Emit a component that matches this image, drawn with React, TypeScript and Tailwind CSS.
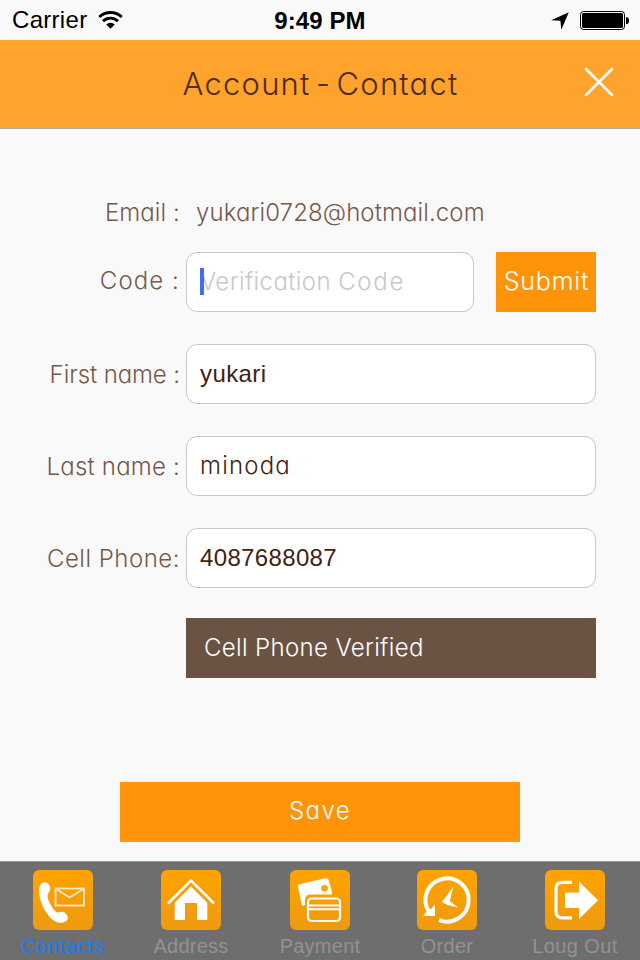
import type { ReactNode } from "react";

const gothic = "font-['Inter',sans-serif] font-light [font-feature-settings:'cv11'] whitespace-nowrap leading-none";

function StatusBar() {
  return (
    <div className="grid h-10 grid-cols-[1fr_auto_1fr] items-center text-black">
      <div className="flex items-center pl-[12px]">
        <span className="text-[24px] leading-none tracking-[0.3px]">Carrier</span>
        <svg className="ml-[11px]" width="25" height="20" viewBox="0 0 26 20" fill="none" stroke="black">
          <path d="M1.3 6.9a17 17 0 0 1 23.4 0" strokeWidth="3.1" />
          <path d="M5.2 11.2a11.3 11.3 0 0 1 15.6 0" strokeWidth="3" />
          <path d="M8.6 14.6a6.2 6.2 0 0 1 8.8 0L13 19.2z" fill="black" stroke="none" />
        </svg>
      </div>
      <span className="pt-px text-[24px] leading-none font-bold tracking-[0.1px]">9:49 PM</span>
      <div className="flex items-center justify-end pr-[11px]">
        <svg className="mt-px mr-[11px]" width="18" height="18" viewBox="0 0 18 18">
          <path d="M17.8 0.2 10.3 17.8 9.4 8.8 0.2 8.2z" />
        </svg>
        <svg width="49" height="19" viewBox="0 0 49 19" fill="none">
          <rect x="0.5" y="0.5" width="44" height="18" rx="3" stroke="black" />
          <rect x="2" y="2" width="41" height="15" rx="1.5" fill="black" />
          <path d="M46 6.2h.8a2.2 3.4 0 0 1 0 6.8H46z" fill="black" />
        </svg>
      </div>
    </div>
  );
}

function TitleBar() {
  return (
    <header className="grid h-[89px] grid-cols-[1fr_auto_1fr] items-center border-b border-[#b0a99f] bg-[#ffa32d]">
      <h1 className={`${gothic} col-start-2 pb-[2px] pl-px text-[31px] tracking-[1.2px] [word-spacing:-4.5px] text-[#4b2c15]`}>Account - Contact</h1>
      <button className="mr-[26px] mb-[5px] justify-self-end" aria-label="Close">
        <svg width="30" height="30" viewBox="0 0 30 30" stroke="white" strokeWidth="2.7" strokeLinecap="round">
          <path d="M2 2 28 28M28 2 2 28" />
        </svg>
      </button>
    </header>
  );
}

function Label({ text, spacing }: { text: string; spacing: string }) {
  return <span className={`${gothic} ${spacing} w-[182px] pr-[2px] text-right text-[24px] text-[#75594a]`}>{text}</span>;
}

function Field({ width, children }: { width: string; children: ReactNode }) {
  return (
    <div className={`relative ml-1 flex h-[60px] ${width} items-center rounded-[11px] border border-[#c8c8c8] bg-white px-[13px] text-[24px] leading-none text-[#41220f]`}>
      {children}
    </div>
  );
}

function Tab({ id, name, active, spacing, children }: { id: string; name: string; active?: boolean; spacing: string; children: ReactNode }) {
  return (
    <div className="flex flex-col items-center pt-2">
      <svg width="60" height="60" viewBox="0 0 60 60" fill="none">
        <defs>
          <linearGradient id={id} x1="0" y1="0" x2="0" y2="1">
            <stop offset="0" stopColor="#ffa300" />
            <stop offset="1" stopColor="#ee9a10" />
          </linearGradient>
        </defs>
        <rect width="60" height="60" rx="6" fill={`url(#${id})`} />
        {children}
      </svg>
      <span className={`mt-[5px] text-[20px] leading-[22px] whitespace-nowrap ${spacing} ${active ? "text-[#147efb]" : "text-[#929292]"}`}>{name}</span>
    </div>
  );
}

export default function App() {
  return (
    <div className="flex h-[960px] w-[640px] flex-col overflow-hidden bg-[#f9f9f9] font-['Liberation_Sans',Arial,sans-serif]">
      <StatusBar />
      <TitleBar />
      <main className="flex flex-1 flex-col">
        <div className="mt-[53px] flex h-[60px] items-center pt-[2px]">
          <Label text="Email :" spacing="tracking-[0.1px]" />
          <span className={`${gothic} ml-[14px] text-[24px] tracking-[0.1px] text-[#75594a]`}>yukari0728@hotmail.com</span>
        </div>
        <div className="mt-[10px] flex h-[60px] items-center">
          <div className="flex pb-[2px]">
            <Label text="Code :" spacing="tracking-[1.1px]" />
          </div>
          <Field width="w-[288px]">
            <span className={`${gothic} tracking-[0.4px] text-[#c7c7cd]`}>
              Verification <span className="tracking-[1.7px]">Code</span>
            </span>
            <span className="absolute top-[15px] left-[13px] h-[27px] w-1 bg-[#446cf2]" />
          </Field>
          <button className={`${gothic} ml-[22px] h-[60px] w-[100px] bg-[#ff9409] pb-[2px] pl-px text-[25px] tracking-[0.8px] text-white`}>Submit</button>
        </div>
        <div className="mt-8 flex h-[60px] items-center">
          <div className="flex pt-[2px]">
            <Label text="First name :" spacing="tracking-[-0.1px]" />
          </div>
          <Field width="w-[410px]">
            <span className="tracking-[0.4px]">yukari</span>
          </Field>
        </div>
        <div className="mt-8 flex h-[60px] items-center">
          <div className="flex pt-[2px]">
            <Label text="Last name :" spacing="tracking-[0.2px]" />
          </div>
          <Field width="w-[410px]">
            <span className={`${gothic} pb-px tracking-[1.2px]`}>minoda</span>
          </Field>
        </div>
        <div className="mt-8 flex h-[60px] items-center">
          <div className="flex pt-[2px]">
            <Label text="Cell Phone:" spacing="tracking-[0.5px]" />
          </div>
          <Field width="w-[410px]">
            <span className="tracking-[0.35px]">4087688087</span>
          </Field>
        </div>
        <div className="mt-[30px] ml-[186px] flex h-[60px] w-[410px] items-center bg-[#6b5344] pl-[18px]">
          <span className={`${gothic} text-[24px] tracking-[0.35px] text-white`}>Cell Phone Verified</span>
        </div>
        <button className={`${gothic} mt-[104px] ml-[120px] h-[60px] w-[400px] bg-[#ff9409] pb-[2px] text-[24px] tracking-[1.4px] text-white`}>Save</button>
      </main>
      <nav className="grid h-[99px] grid-cols-[126px_130px_128px_126px_130px] border-t border-[#989898] bg-[#6e6e6e]">
        <Tab id="tile-contacts" name="Contacts" active spacing="tracking-[0.65px]">
          <path fill="white" d="M6 20C6 15.500 9 12 12 12.200c3 0 5.300 3.300 5.300 6.300 0 3-2.600 4.200-2.800 7C14.300 30 19.500 39 23.500 42.300c1.500 1 3.500-1 6-.6 2.500.5 5.500 4 5.500 6 0 3-4.500 5.300-8 5.100C16 52 6 33 6 20z" />
          <g stroke="#ffe9c4" strokeWidth="1.8">
            <rect x="22.500" y="18.500" width="28.500" height="17" />
            <path d="m23 19 13.500 8.500L50.500 19" />
          </g>
        </Tab>
        <Tab id="tile-address" name="Address" spacing="tracking-[0.25px]">
          <path d="M7 33.500 30 10.500l23 23" stroke="white" strokeWidth="2.6" />
          <path fill="white" d="m30 16.500 16.300 16.300V50H36V33H24v17H13.700V32.800z" />
        </Tab>
        <Tab id="tile-payment" name="Payment" spacing="tracking-[0.25px]">
          <path fill="white" fillRule="evenodd" d="M8 17q-.5-2 1.500-2.700L35 8.300q2.500-.5 3.500 1.200L41.500 20l.5 4.500H20q-4 0-5 5V35l-3 1zM34.500 15a3.300 3.300 0 1 0 0 6.600A3.300 3.300 0 0 0 34.500 15z" />
          <rect x="18" y="28.500" width="32" height="22.500" rx="3.500" stroke="white" strokeWidth="2.200" />
          <path d="M18 35.400h32M18 39.200h32" stroke="white" strokeWidth="2" />
        </Tab>
        <Tab id="tile-order" name="Order" spacing="tracking-[0.25px]">
          <path d="M11.500 41A21.600 21.600 0 1 1 22 50" stroke="white" strokeWidth="4" />
          <path fill="white" d="M18 34.500V46H6l4-4.500-1-3 5 .5zM36.500 16.500 32.800 31 41 37.500 30.500 35 25 32z" />
        </Tab>
        <Tab id="tile-logout" name="Loug Out" spacing="tracking-[0.4px]">
          <path d="M27 12.300h-9.500q-6.500 0-6.500 6.500v23q0 6 6.500 6H27" stroke="white" strokeWidth="3.200" />
          <path fill="white" d="M20 22.500h14V11.500l19 18.800L34 49V38H20z" />
        </Tab>
      </nav>
    </div>
  );
}
